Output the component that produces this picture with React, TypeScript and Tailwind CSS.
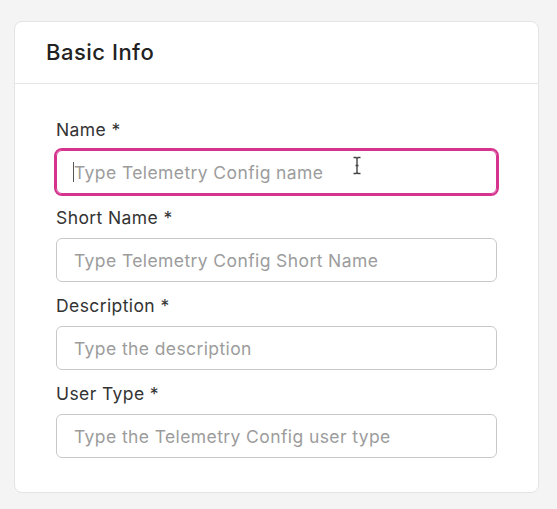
import React from "react";

const fields = [
  { label: "Name *", placeholder: "Type Telemetry Config name", focused: true },
  { label: "Short Name *", placeholder: "Type Telemetry Config Short Name" },
  { label: "Description *", placeholder: "Type the description" },
  { label: "User Type *", placeholder: "Type the Telemetry Config user type" },
];

const App = () => {
  return (
    <div className="min-h-[509px] w-[557px] bg-[#f4f4f4] pt-[21px] pl-[14px] font-['Inter',sans-serif]">
      <div className="w-[525px] rounded-lg border border-[#e4e4e4] bg-white">
        <div className="flex h-[62px] items-center border-b border-[#e6e6e6] px-[31px]">
          <h2 className="text-[22px] font-medium tracking-[0.5px] text-[#222]">Basic Info</h2>
        </div>

        <div className="flex flex-col gap-[12px] px-[41px] pt-[34px] pb-[34px]">
          {fields.map((f) => (
            <div key={f.label} className="flex flex-col gap-[8px]">
              <label className="h-[24px] text-[17.5px] leading-[24px] tracking-[0.4px] text-[#333]">{f.label}</label>
              <div className="relative">
                <input
                  type="text"
                  placeholder={f.placeholder}
                  className={
                    f.focused
                      ? "block h-[44px] w-full rounded-md border border-[#d6338f] px-[17px] text-[17.5px] tracking-[0.4px] text-[#333] placeholder:text-[#9c9c9c] outline-2 outline-[#d6338f] focus:outline-none"
                      : "block h-[44px] w-full rounded-md border border-[#c9c9c9] px-[17px] text-[17.5px] tracking-[0.4px] text-[#333] placeholder:text-[#9c9c9c] focus:outline-none"
                  }
                />
                {f.focused && (
                  <>
                    <span className="absolute top-[12px] left-[17px] h-[20px] w-px bg-[#555]" />
                    <svg
                      className="absolute top-[6px] left-[296px]"
                      width="10"
                      height="19"
                      viewBox="0 0 10 19"
                      fill="none"
                      stroke="#444"
                      strokeWidth="1.4"
                    >
                      <path d="M1.5 1.5h2.5l1 1 1-1h2.5M5 2.5v14M1.5 17.5h2.5l1-1 1 1h2.5M3.5 9.5h3" />
                    </svg>
                  </>
                )}
              </div>
            </div>
          ))}
        </div>
      </div>
    </div>
  );
};

export default App;
